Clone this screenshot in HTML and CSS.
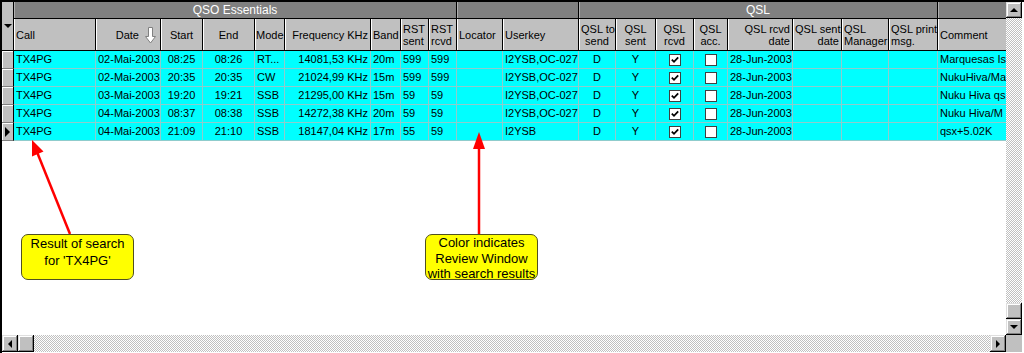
FILE: index.html
```html
<!DOCTYPE html>
<html>
<head>
<meta charset="utf-8">
<title>Review Window</title>
<link rel="stylesheet" href="styles.css">
</head>
<body>
<div class="window">
  <div class="main">
    <div class="view">
      <div class="grid">
        <div class="ih"><span class="tri-down"></span></div>
        <div class="g span9">QSO Essentials</div>
        <div class="g span2"></div>
        <div class="g span8">QSL</div>
        <div class="g"></div>

        <div class="h">Call</div>
        <div class="h r">Date <svg class="sort" width="11" height="17" viewBox="0 0 11 17"><path d="M3.5 0.5 H7.5 V9.5 H10.5 L5.5 16 L0.5 9.5 H3.5 Z" fill="#fff" stroke="#808080"/></svg></div>
        <div class="h c">Start</div>
        <div class="h c">End</div>
        <div class="h tight">Mode</div>
        <div class="h r">Frequency KHz</div>
        <div class="h">Band</div>
        <div class="h">RST<br>sent</div>
        <div class="h">RST<br>rcvd</div>
        <div class="h">Locator</div>
        <div class="h">Userkey</div>
        <div class="h c">QSL to<br>send</div>
        <div class="h c">QSL<br>sent</div>
        <div class="h c">QSL<br>rcvd</div>
        <div class="h c">QSL<br>acc.</div>
        <div class="h r">QSL rcvd<br>date</div>
        <div class="h r">QSL sent<br>date</div>
        <div class="h">QSL<br>Manager</div>
        <div class="h">QSL print<br>msg.</div>
        <div class="h">Comment</div>

        <div class="ri"></div>
        <div class="d">TX4PG</div><div class="d c">02-Mai-2003</div><div class="d c">08:25</div><div class="d c">08:26</div><div class="d">RT...</div><div class="d r">14081,53 KHz</div><div class="d">20m</div><div class="d">599</div><div class="d">599</div><div class="d"></div><div class="d">I2YSB,OC-027</div><div class="d c">D</div><div class="d c">Y</div>
        <div class="d cb"><svg width="12" height="12" viewBox="0 0 12 12"><rect x="0.5" y="0.5" width="11" height="11" fill="#fff" stroke="#404040"/><path d="M2.8 5.6 L5 7.8 L9.2 3.4" stroke="#000" stroke-width="1.8" fill="none"/></svg></div>
        <div class="d cb"><svg width="12" height="12" viewBox="0 0 12 12"><rect x="0.5" y="0.5" width="11" height="11" fill="#fff" stroke="#404040"/></svg></div>
        <div class="d">28-Jun-2003</div><div class="d"></div><div class="d"></div><div class="d"></div><div class="d">Marquesas Is</div>

        <div class="ri"></div>
        <div class="d">TX4PG</div><div class="d c">02-Mai-2003</div><div class="d c">20:35</div><div class="d c">20:35</div><div class="d">CW</div><div class="d r">21024,99 KHz</div><div class="d">15m</div><div class="d">599</div><div class="d">599</div><div class="d"></div><div class="d">I2YSB,OC-027</div><div class="d c">D</div><div class="d c">Y</div>
        <div class="d cb"><svg width="12" height="12" viewBox="0 0 12 12"><rect x="0.5" y="0.5" width="11" height="11" fill="#fff" stroke="#404040"/><path d="M2.8 5.6 L5 7.8 L9.2 3.4" stroke="#000" stroke-width="1.8" fill="none"/></svg></div>
        <div class="d cb"><svg width="12" height="12" viewBox="0 0 12 12"><rect x="0.5" y="0.5" width="11" height="11" fill="#fff" stroke="#404040"/></svg></div>
        <div class="d">28-Jun-2003</div><div class="d"></div><div class="d"></div><div class="d"></div><div class="d">NukuHiva/Ma</div>

        <div class="ri"></div>
        <div class="d">TX4PG</div><div class="d c">03-Mai-2003</div><div class="d c">19:20</div><div class="d c">19:21</div><div class="d">SSB</div><div class="d r">21295,00 KHz</div><div class="d">15m</div><div class="d">59</div><div class="d">59</div><div class="d"></div><div class="d">I2YSB,OC-027</div><div class="d c">D</div><div class="d c">Y</div>
        <div class="d cb"><svg width="12" height="12" viewBox="0 0 12 12"><rect x="0.5" y="0.5" width="11" height="11" fill="#fff" stroke="#404040"/><path d="M2.8 5.6 L5 7.8 L9.2 3.4" stroke="#000" stroke-width="1.8" fill="none"/></svg></div>
        <div class="d cb"><svg width="12" height="12" viewBox="0 0 12 12"><rect x="0.5" y="0.5" width="11" height="11" fill="#fff" stroke="#404040"/></svg></div>
        <div class="d">28-Jun-2003</div><div class="d"></div><div class="d"></div><div class="d"></div><div class="d">Nuku Hiva qs</div>

        <div class="ri"></div>
        <div class="d">TX4PG</div><div class="d c">04-Mai-2003</div><div class="d c">08:37</div><div class="d c">08:38</div><div class="d">SSB</div><div class="d r">14272,38 KHz</div><div class="d">20m</div><div class="d">59</div><div class="d">59</div><div class="d"></div><div class="d">I2YSB,OC-027</div><div class="d c">D</div><div class="d c">Y</div>
        <div class="d cb"><svg width="12" height="12" viewBox="0 0 12 12"><rect x="0.5" y="0.5" width="11" height="11" fill="#fff" stroke="#404040"/><path d="M2.8 5.6 L5 7.8 L9.2 3.4" stroke="#000" stroke-width="1.8" fill="none"/></svg></div>
        <div class="d cb"><svg width="12" height="12" viewBox="0 0 12 12"><rect x="0.5" y="0.5" width="11" height="11" fill="#fff" stroke="#404040"/></svg></div>
        <div class="d">28-Jun-2003</div><div class="d"></div><div class="d"></div><div class="d"></div><div class="d">Nuku Hiva/M</div>

        <div class="ri cur"><span class="tri-right"></span></div>
        <div class="d">TX4PG</div><div class="d c">04-Mai-2003</div><div class="d c">21:09</div><div class="d c">21:10</div><div class="d">SSB</div><div class="d r">18147,04 KHz</div><div class="d">17m</div><div class="d">55</div><div class="d">59</div><div class="d"></div><div class="d">I2YSB</div><div class="d c">D</div><div class="d c">Y</div>
        <div class="d cb"><svg width="12" height="12" viewBox="0 0 12 12"><rect x="0.5" y="0.5" width="11" height="11" fill="#fff" stroke="#404040"/><path d="M2.8 5.6 L5 7.8 L9.2 3.4" stroke="#000" stroke-width="1.8" fill="none"/></svg></div>
        <div class="d cb"><svg width="12" height="12" viewBox="0 0 12 12"><rect x="0.5" y="0.5" width="11" height="11" fill="#fff" stroke="#404040"/></svg></div>
        <div class="d">28-Jun-2003</div><div class="d"></div><div class="d"></div><div class="d"></div><div class="d">qsx+5.02K</div>
      </div>
    </div>
    <div class="vscroll">
      <div class="btn"><span class="a-up"></span></div>
      <div class="track"></div>
      <div class="btn"></div>
      <div class="btn"><span class="a-down"></span></div>
    </div>
  </div>
  <div class="hscroll">
    <div class="btn"><span class="a-left"></span></div>
    <div class="btn"></div>
    <div class="track"></div>
    <div class="btn"><span class="a-right"></span></div>
    <div class="corner"></div>
  </div>
</div>

<svg class="arrows" width="1024" height="353" viewBox="0 0 1024 353">
  <line x1="70" y1="234" x2="37" y2="152" stroke="#f00" stroke-width="2.5"/>
  <polygon points="32,140 43.5,151.5 32,156.5" fill="#f00"/>
  <line x1="479" y1="234" x2="479" y2="146" stroke="#f00" stroke-width="2.5"/>
  <polygon points="479,132 485,149 473,149" fill="#f00"/>
</svg>
<div class="note note1">Result of search<br>for 'TX4PG'</div>
<div class="note note2">Color indicates<br>Review Window<br>with search results</div>
</body>
</html>
```
FILE: styles.css
```css
* { box-sizing: border-box; }

body {
  margin: 0;
  width: 1024px;
  height: 353px;
  overflow: hidden;
  background: #fff;
  font-family: "Liberation Sans", Arial, sans-serif;
  font-size: 11px;
  color: #000;
  position: relative;
}

.window {
  height: 353px;
  display: flex;
  flex-direction: column;
  border-left: 2px solid #000;
  border-top: 2px solid #000;
  padding-right: 2px;
  padding-bottom: 1px;
}

.main {
  flex: 1;
  display: flex;
  min-height: 0;
}

.view {
  flex: 1;
  min-width: 0;
  overflow: hidden;
  background: #fff;
}

.grid {
  display: grid;
  width: max-content;
  grid-template-columns: 12px 82px 65px 42px 52px 30px 86px 30px 28px 28px 46px 76px 37px 40px 38px 34px 65px 49px 47px 49px 100px;
  grid-template-rows: 17px 32px repeat(5, 18px);
}

.ih {
  grid-row: span 2;
  background: #c0c0c0;
  border-right: 1px solid #000;
  border-bottom: 1px solid #000;
  display: flex;
  justify-content: center;
  padding-top: 22px;
}

.tri-down {
  width: 0;
  height: 0;
  border-left: 4px solid transparent;
  border-right: 4px solid transparent;
  border-top: 4px solid #000;
}

.g {
  background: #808080;
  color: #fff;
  border-right: 1px solid #000;
  border-bottom: 1px solid #000;
  box-shadow: inset 1px 0 #b0b0b0;
  display: flex;
  align-items: center;
  justify-content: center;
  font-size: 12px;
}

.span9 { grid-column: span 9; }
.span8 { grid-column: span 8; }
.span2 { grid-column: span 2; }

.h {
  background: #c0c0c0;
  border-right: 1px solid #000;
  border-bottom: 1px solid #000;
  box-shadow: inset 1px 0 #fff;
  display: flex;
  flex-direction: column;
  justify-content: center;
  padding: 0 2px;
  line-height: 12px;
  white-space: nowrap;
  overflow: hidden;
}

.h.c { text-align: center; }
.h.r { text-align: right; }
.h.tight { padding: 0 0 0 1px; }

.h.r:has(.sort) {
  flex-direction: row;
  align-items: center;
  justify-content: flex-end;
  gap: 6px;
  padding-right: 4px;
}

.sort { display: block; margin-top: 1px; }

.ri {
  background: #c0c0c0;
  border-right: 1px solid #000;
  border-bottom: 1px solid #808080;
  box-shadow: inset 1px 1px #fff;
  display: flex;
  align-items: center;
  justify-content: center;
}

.tri-right {
  width: 0;
  height: 0;
  border-top: 5px solid transparent;
  border-bottom: 5px solid transparent;
  border-left: 5px solid #000;
}

.d {
  background: #00ffff;
  border-right: 1px solid #8fcccc;
  border-bottom: 1px solid #8fcccc;
  padding: 0 2px;
  line-height: 17px;
  white-space: nowrap;
  overflow: hidden;
}

.d.c { text-align: center; }
.d.r { text-align: right; }

.d.cb {
  display: flex;
  align-items: center;
  justify-content: center;
}

.d.cb svg { display: block; }

.vscroll {
  width: 16px;
  display: flex;
  flex-direction: column;
}

.hscroll {
  height: 17px;
  display: flex;
}

.btn {
  flex: none;
  width: 16px;
  height: 16px;
  background: #c0c0c0;
  box-shadow: inset -1px -1px #000, inset 1px 1px #dfdfdf, inset -2px -2px #808080, inset 2px 2px #fff;
  display: flex;
  align-items: center;
  justify-content: center;
}

.hscroll .btn { height: 17px; }

.track {
  flex: 1;
  background: conic-gradient(#c0c0c0 25%, #fff 0 50%, #c0c0c0 0 75%, #fff 0) 0 0 / 2px 2px;
}

.corner {
  width: 16px;
  background: #c0c0c0;
}

.a-up, .a-down, .a-left, .a-right { width: 0; height: 0; }
.a-up { border-left: 4px solid transparent; border-right: 4px solid transparent; border-bottom: 4px solid #000; }
.a-down { border-left: 4px solid transparent; border-right: 4px solid transparent; border-top: 4px solid #000; }
.a-left { border-top: 4px solid transparent; border-bottom: 4px solid transparent; border-right: 4px solid #000; }
.a-right { border-top: 4px solid transparent; border-bottom: 4px solid transparent; border-left: 4px solid #000; }

.arrows {
  position: absolute;
  left: 0;
  top: 0;
  pointer-events: none;
}

.note {
  position: absolute;
  top: 234px;
  width: 113px;
  height: 46px;
  background: #ffff00;
  border: 1px solid #505020;
  border-radius: 7px;
  font-size: 13px;
  text-align: center;
  white-space: nowrap;
}

.note1 {
  left: 21px;
  line-height: 17px;
}

.note2 {
  left: 425px;
  line-height: 15.5px;
}
```
